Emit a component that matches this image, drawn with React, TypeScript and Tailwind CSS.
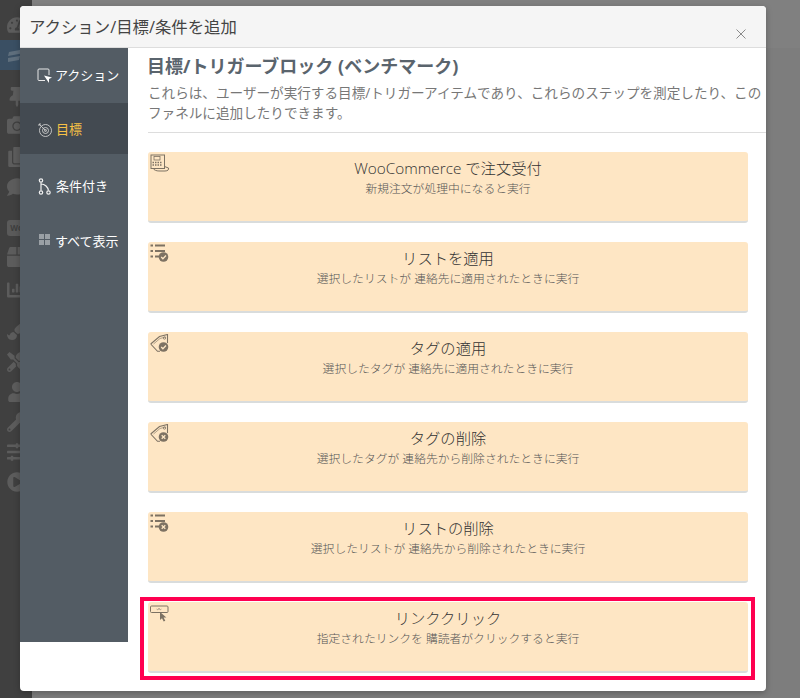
import React from "react";
import { FaTachometerAlt, FaThumbtack, FaCamera, FaCopy, FaComment, FaBox, FaChartBar, FaPaintBrush, FaUser, FaWrench, FaPlayCircle, FaSlidersH, FaTools } from "react-icons/fa";

const C = "#7d7263";

function Shop() {
  return (
    <svg width="20" height="18" viewBox="0 0 20 18" fill="none" stroke={C} strokeWidth="1">
      <rect x="1" y="1" width="13.500" height="13.500" />
      <rect x="4" y="2.500" width="6" height="3.500" strokeWidth="0.800" />
      <path d="M2.500 8.500h10M2.500 11h10" strokeWidth="1.500" strokeDasharray="1.500 1" />
      <path d="M4 14.500v1c2 1.500 4 1.500 7 1.500h4c3 0 4-1.500 3.500-3l-4-1.500" />
    </svg>
  );
}
function ListBase({ children }: { children: React.ReactNode }) {
  return (
    <svg width="20" height="18" viewBox="0 0 20 18" fill="none" stroke={C}>
      <path d="M0.500 1.500h2.500M0.500 7h2.500M0.500 12.500h2.500" strokeWidth="2" />
      <path d="M5 1.500h10M5 7h10M5 12.500h4" strokeWidth="1.800" />
      {children}
    </svg>
  );
}
function Check() {
  return (
    <g>
      <circle cx="13.500" cy="13" r="4.800" fill={C} stroke="none" />
      <path d="M11.200 13l1.700 1.800 3.100-3.300" stroke="#fee6c4" strokeWidth="1.300" />
    </g>
  );
}
function Cross() {
  return (
    <g>
      <circle cx="13.500" cy="13" r="4.800" fill={C} stroke="none" />
      <path d="M11.700 11.200l3.600 3.600M15.300 11.200l-3.600 3.600" stroke="#fee6c4" strokeWidth="1.300" />
    </g>
  );
}
function Tag({ children }: { children: React.ReactNode }) {
  return (
    <svg width="20" height="18" viewBox="0 0 20 18" fill="none" stroke={C}>
      <path d="M0.700 10L9.500 2.500 17.500 0.500V9M0.700 10l6.800 7.300H10" strokeWidth="1.100" />
      <path d="M3.500 10l6.500-5.500 5.500-1.500" strokeWidth="0.600" />
      <circle cx="14.500" cy="4" r="1.200" strokeWidth="0.800" />
      {children}
    </svg>
  );
}
function LinkClick() {
  return (
    <svg width="20" height="18" viewBox="0 0 20 18" fill="none" stroke={C}>
      <rect x="0.500" y="2" width="17.500" height="6.500" rx="1" strokeWidth="1" />
      <path d="M6.500 5l1.500 1 1-2 1 2 1.500-1" strokeWidth="0.500" />
      <path d="M10 8l0 8 2-1.800 1.700 3.300 1.600-.8-1.700-3.200h2.800z" fill={C} stroke="none" />
    </svg>
  );
}

const cards = [
  { icon: <Shop />, t: "WooCommerce で注文受付", s: "新規注文が処理中になると実行" },
  { icon: <ListBase><Check /></ListBase>, t: "リストを適用", s: "選択したリストが 連絡先に適用されたときに実行" },
  { icon: <Tag><Check /></Tag>, t: "タグの適用", s: "選択したタグが 連絡先に適用されたときに実行" },
  { icon: <Tag><Cross /></Tag>, t: "タグの削除", s: "選択したタグが 連絡先から削除されたときに実行" },
  { icon: <ListBase><Cross /></ListBase>, t: "リストの削除", s: "選択したリストが 連絡先から削除されたときに実行" },
  { icon: <LinkClick />, t: "リンククリック", s: "指定されたリンクを 購読者がクリックすると実行" },
];

const woo = (
  <span className="block w-[24px] h-[16px] rounded-[3px] bg-[#5a5a5a] text-[8px] leading-[16px] text-[#3f3f3f] font-bold text-center">Woo</span>
);

const bgBefore: [React.ReactNode, string][] = [[<FaTachometerAlt />, "mt-[13px]"]];
const bgAfter: [React.ReactNode, string][] = [
  [<FaThumbtack />, "mt-[15px]"],
  [<FaCamera />, "mt-[4px]"],
  [<FaCopy />, "mt-[8px]"],
  [<FaComment />, "mt-[6px]"],
  [woo, "mt-[17px]"],
  [<FaBox />, "mt-[5px]"],
  [<FaChartBar />, "mt-[9px]"],
  [<FaPaintBrush />, "mt-[16px]"],
  [<FaTools />, "mt-[8px]"],
  [<FaUser />, "mt-[6px]"],
  [<FaWrench />, "mt-[6px]"],
  [<FaSlidersH />, "mt-[6px]"],
  [<FaPlayCircle />, "mt-[6px]"],
];

function BgIcon({ children, cls }: { children: React.ReactNode; cls: string }) {
  return <div className={`h-[24px] pl-[7px] flex items-center ${cls}`}>{children}</div>;
}

export default function App() {
  return (
    <div className="relative w-[800px] h-[698px] overflow-hidden bg-[#7d7d7d] font-['Open_Sans','Noto_Sans_CJK_JP',sans-serif]">
      <div className="flex h-full">
        <div className="w-[32px] h-full bg-[#404040] text-[#5c5c5c] text-[20px]">
          {bgBefore.map(([ic, cls], i) => (
            <BgIcon key={i} cls={cls}>{ic}</BgIcon>
          ))}
          <div className="mt-[3px] h-[30px] pl-[7px] pt-[9px] bg-[#3a4f63]">
            <svg width="20" height="14" viewBox="0 0 20 14" fill="#5f6f7d"><path d="M2 3l16-3-1 4L1 7zM1 9l12-2-1 4-11 2z" /></svg>
          </div>
          {bgAfter.map(([ic, cls], i) => (
            <BgIcon key={i} cls={cls}>{ic}</BgIcon>
          ))}
        </div>
        <div className="flex-1">
          <div className="h-[48px] bg-[#808080]" />
        </div>
      </div>

      {/* Modal */}
      <div className="absolute left-[20px] top-[6px] w-[746px] h-[685px] bg-white rounded-[4px] shadow-[0_2px_6px_rgba(0,0,0,0.25)] overflow-hidden flex flex-col">
        <div className="h-[42px] shrink-0 bg-[#f5f5f5] border-b border-[#dddddd] flex items-center justify-between pl-[10px] pr-[20px]">
          <span className="text-[16.400px] leading-[42px] text-[#444444] -ml-px">アクション/目標/条件を追加</span>
          <svg width="10" height="10" viewBox="0 0 10 10" className="mt-[14px]" stroke="#8a8a8a" strokeWidth="1"><path d="M0.500 0.500l9 9M9.500 0.500l-9 9" /></svg>
        </div>
        <div className="flex flex-1 min-h-0">
          <aside className="w-[108px] h-[594px] shrink-0 bg-[#535c64] text-white text-[13px]">
            <div className="h-[55px] flex items-center pl-[17px] gap-[2px]">
              <svg width="16" height="16" viewBox="0 0 16 16" fill="none" stroke="#e8e8e8">
                <path d="M8 12.500H2a1 1 0 0 1-1-1V2a1 1 0 0 1 1-1h9a1 1 0 0 1 1 1v5" />
                <path d="M7 7.500l8 2-3 1.500 0 4z" fill="#ffffff" stroke="none" />
              </svg>
              <span>アクション</span>
            </div>
            <div className="h-[51px] flex items-center pl-[17px] pt-[3px] gap-[3px] bg-[#434a51]">
              <svg width="16" height="16" viewBox="0 0 16 16" fill="none" stroke="#cfcfcf" strokeWidth="0.900">
                <circle cx="8.500" cy="8.500" r="6" />
                <circle cx="8.500" cy="8.500" r="3" />
                <circle cx="8.500" cy="8.500" r="1" />
                <path d="M8.500 8.500L2 2M1 3h2V1" />
              </svg>
              <span className="text-[#f6c146]">目標</span>
            </div>
            <div className="h-[56px] flex items-center pl-[17px] pt-[9px] gap-[3px]">
              <svg width="16" height="18" viewBox="0 0 16 18" fill="none" stroke="#f0f0f0" strokeWidth="1.200">
                <circle cx="4" cy="2.500" r="1.700" />
                <circle cx="4" cy="14.500" r="1.700" />
                <circle cx="11.500" cy="14.500" r="1.700" />
                <path d="M4 4.500v8M4 6c4 0 7 3 7.500 6.500" />
              </svg>
              <span>条件付き</span>
            </div>
            <div className="h-[56px] flex items-center pl-[19px] pt-[8px] gap-[5px]">
              <span className="grid grid-cols-2 gap-[1px] mb-[5px]">
                <i className="block w-[5px] h-[5px] bg-[#9aa0a5]" />
                <i className="block w-[5px] h-[5px] bg-[#9aa0a5]" />
                <i className="block w-[5px] h-[5px] bg-[#9aa0a5]" />
                <i className="block w-[5px] h-[5px] bg-[#9aa0a5]" />
              </span>
              <span>すべて表示</span>
            </div>
          </aside>

          <main className="flex-1 min-w-0 pl-[20px] overflow-hidden">
            <h2 className="mt-[4px] -ml-px h-[28px] text-[18px] leading-[28px] font-bold text-[#5a646d] whitespace-nowrap">目標/トリガーブロック (ベンチマーク)</h2>
            <p className="mt-[3px] w-[618px] text-[13.600px] leading-[20px] text-[#777777]">これらは、ユーザーが実行する目標/トリガーアイテムであり、これらのステップを測定したり、このファネルに追加したりできます。</p>
            <div className="mt-[9px] h-px bg-[#dddddd]" />
            <div className="mt-[19px] w-[600px] flex flex-col gap-[19px]">
              {cards.map((c) => (
                <div key={c.t} className="relative h-[71px] rounded-[3px] bg-[#fee6c4] border-b-2 border-[#d9dcdc] pt-[5px] text-center">
                  <span className="absolute left-[2px] top-[2px]">{c.icon}</span>
                  <div className="text-[15.300px] leading-[22px] font-light text-[#333333]">{c.t}</div>
                  <div className="text-[11.800px] leading-[18px] font-light text-[#555555]">{c.s}</div>
                </div>
              ))}
            </div>
          </main>
        </div>
      </div>

      {/* Annotation */}
      <div className="absolute left-[140px] top-[597px] w-[615px] h-[83px] border-[4px] border-[#ff0050]" />
    </div>
  );
}
